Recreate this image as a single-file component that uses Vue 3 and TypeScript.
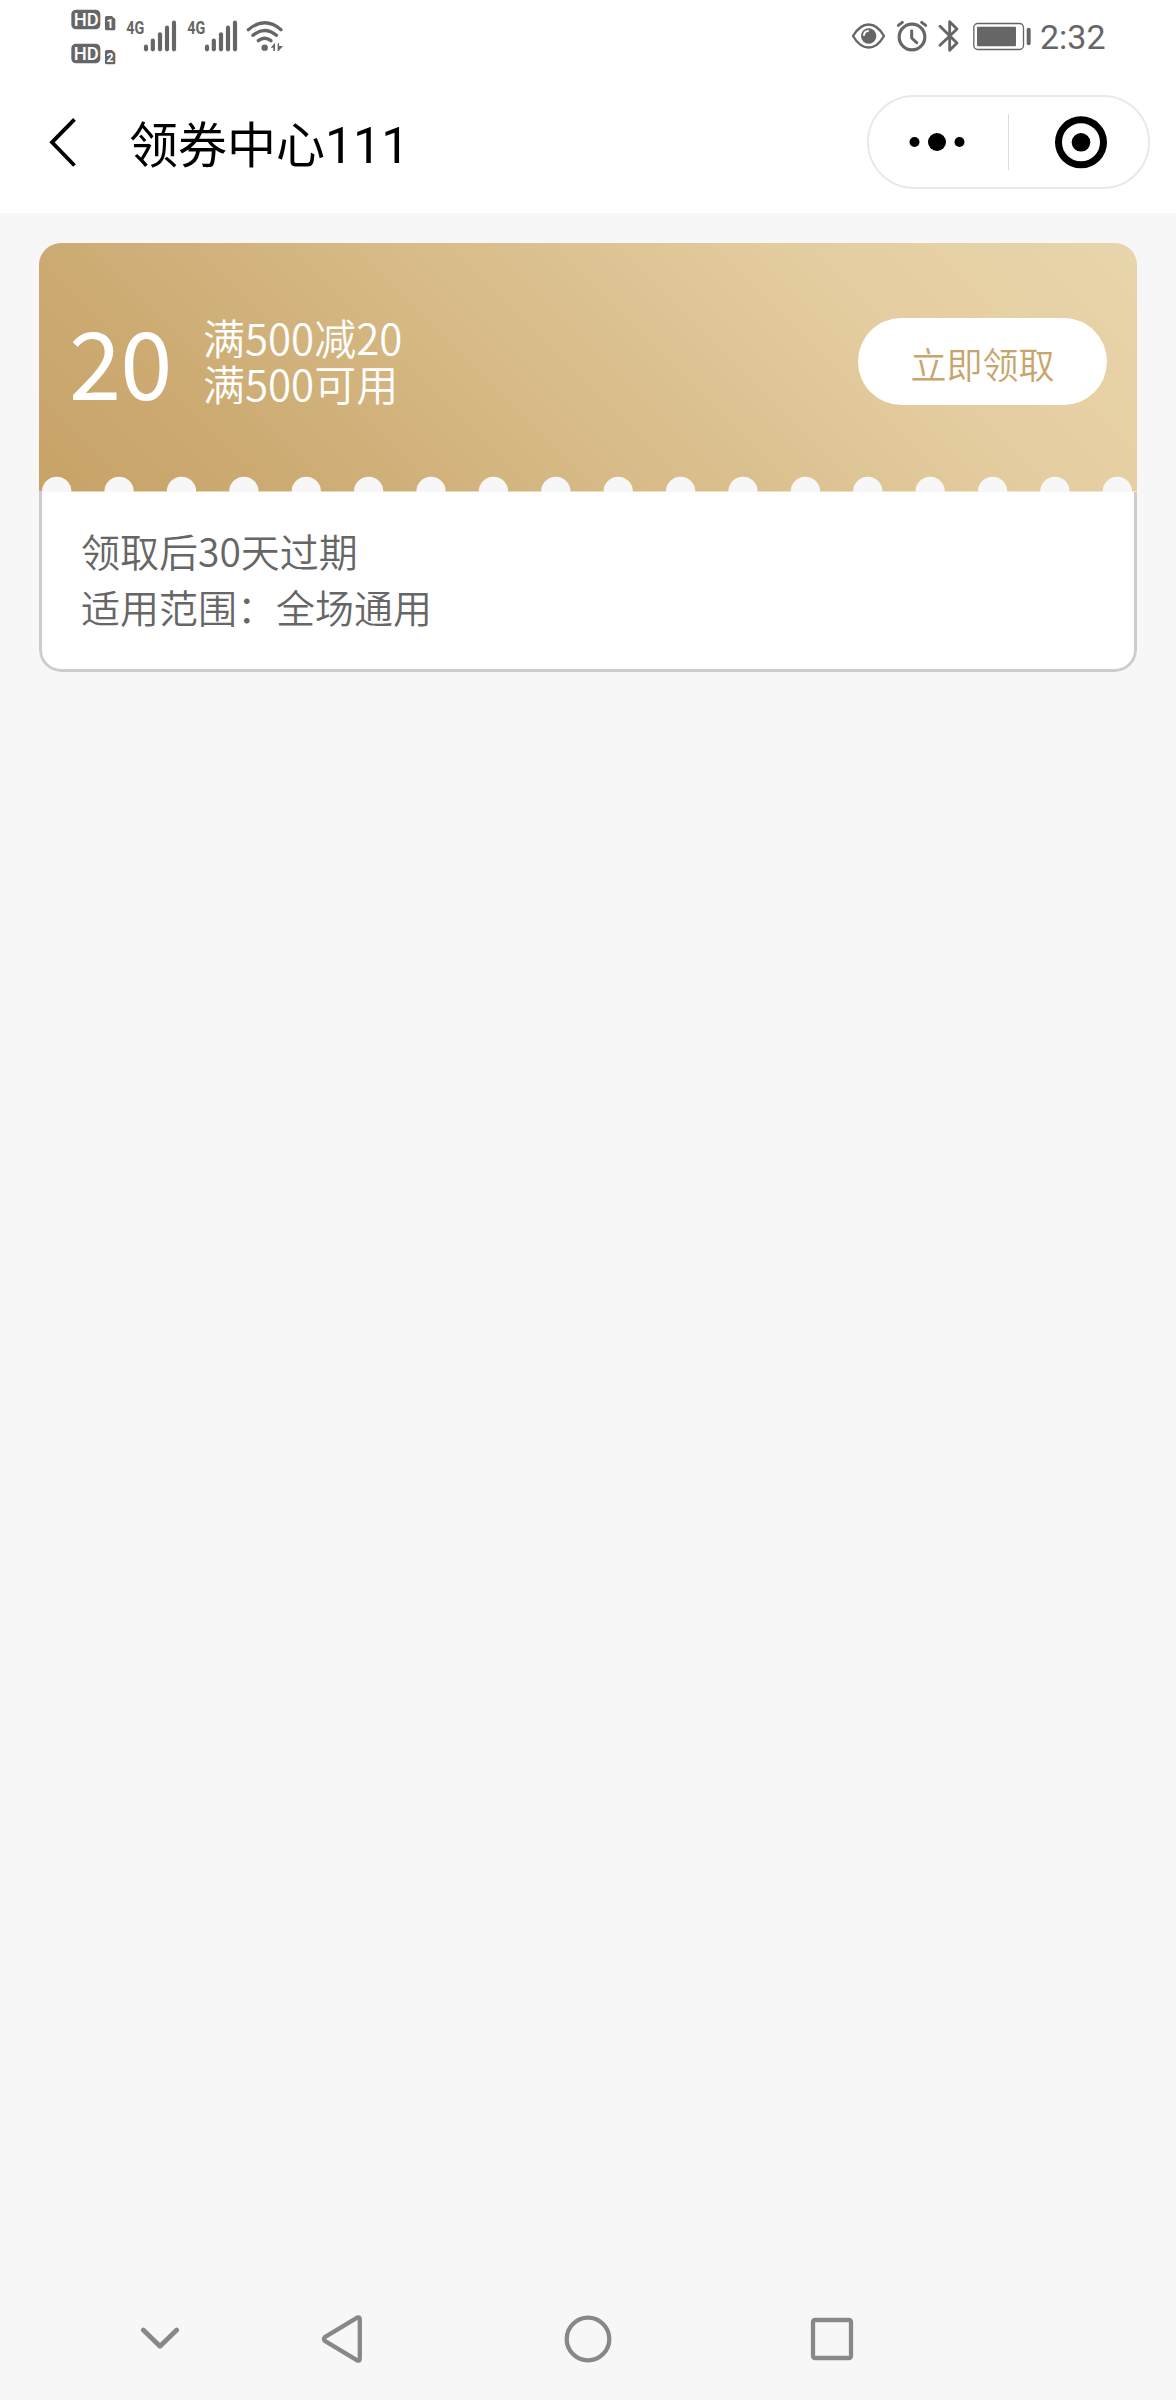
<script setup lang="ts">
const holes: number[] = Array.from({ length: 18 }, (_, i) => 17.7 + i * 62.39)
const bars = [
  { x: 288, y: 140 },
  { x: 308.5, y: 122 },
  { x: 330, y: 103 },
  { x: 351, y: 83 },
  { x: 372, y: 68 },
]
const coupon = {
  amount: '20',
  title: '满500减20',
  condition: '满500可用',
  expiry: '领取后30天过期',
  scope: '适用范围：全场通用',
}
</script>

<template>
  <div class="page">
    <header class="status">
      <svg class="status-left" width="250" height="75" viewBox="0 0 750 225">
        <g v-for="(n, i) in ['1', '2']" :key="n" :transform="`translate(0 ${i * 102})`">
          <rect x="64" y="29" width="87" height="59" rx="14" fill="#666" />
          <text x="71" y="79" class="hd" textLength="75" lengthAdjust="spacingAndGlyphs">HD</text>
          <path d="M165 53q0-5 5-5h16l10 10v28q0 5-5 5h-21q-5 0-5-5z" fill="#666" />
          <text x="180" y="84" class="sim" text-anchor="middle">{{ n }}</text>
        </g>
        <g v-for="dx in [0, 183]" :key="dx" :transform="`translate(${dx} 0)`">
          <text x="229" y="103" class="net" textLength="54" lengthAdjust="spacingAndGlyphs">4G</text>
          <path
            v-for="b in bars"
            :key="b.x"
            :d="`M${b.x} ${b.y}V148`"
            stroke="#666"
            stroke-width="12.500"
            stroke-linecap="round"
          />
        </g>
        <g fill="none" stroke="#666" stroke-width="10" stroke-linecap="round">
          <path d="M595 89Q644 48 693 89" />
          <path d="M609 106Q644 77 679 106" />
          <path d="M625 122Q644 107 663 122" />
        </g>
        <circle cx="644" cy="143" r="9.500" fill="#666" />
        <path d="M662 143L675 128V153H670V143ZM683 130H687V138H699L686 153H683Z" fill="#666" />
      </svg>
      <div class="status-right">
        <svg width="193" height="75" viewBox="0 0 579 225">
          <g fill="none" stroke="#666" stroke-linecap="round" stroke-linejoin="round">
            <path d="M39 108C66 62 106 62 132 108C106 154 66 154 39 108Z" stroke-width="7" />
            <circle cx="216" cy="111" r="38.500" stroke-width="9.500" />
            <path d="M215 92V114L230 128" stroke-width="9" />
            <path d="M175 76L187 67M257 76L245 67" stroke-width="9" />
            <path d="M300 79L351 129L329 151V65L351 87L300 136" stroke-width="8.500" />
            <rect x="401.500" y="70.500" width="149" height="78" rx="12" stroke-width="4" />
            <path d="M566 89V130" stroke-width="12" />
          </g>
          <circle cx="86" cy="108" r="23" fill="#666" />
          <path d="M72 105Q73 94 84 93" fill="none" stroke="#fff" stroke-width="6" stroke-linecap="round" />
          <rect x="411" y="80" width="117" height="59" rx="3" fill="#666" />
        </svg>
        <span class="clock">2:32</span>
      </div>
    </header>

    <nav class="nav">
      <svg class="back" width="40" height="60" viewBox="0 0 40 60">
        <path d="M29.500 7.300L7 30.300L29.500 53.500" fill="none" stroke="#000" stroke-width="3.800" />
      </svg>
      <h1><span class="han">领券中心</span>111</h1>
      <div class="capsule">
        <svg width="60" height="60" viewBox="0 0 60 60">
          <circle cx="7.500" cy="30" r="5" />
          <circle cx="30" cy="30" r="9" />
          <circle cx="52.500" cy="30" r="5" />
        </svg>
        <i class="divider"></i>
        <svg width="60" height="60" viewBox="0 0 60 60">
          <circle cx="30" cy="30.300" r="22.500" fill="none" stroke="#000" stroke-width="7" />
          <circle cx="30" cy="30.300" r="9.300" />
        </svg>
      </div>
    </nav>

    <main class="content">
      <article class="coupon">
        <section class="top">
          <div class="summary">
            <strong class="amount">{{ coupon.amount }}</strong>
            <div class="terms">
              <p>{{ coupon.title }}</p>
              <p>{{ coupon.condition }}</p>
            </div>
            <button class="claim" type="button">立即领取</button>
          </div>
          <svg class="perforation" width="1098" height="16" viewBox="0 0 1098 16">
            <ellipse v-for="x in holes" :key="x" :cx="x" cy="15.500" rx="14.700" ry="14.700" fill="#f7f7f7" />
          </svg>
        </section>
        <section class="details">
          <p>{{ coupon.expiry }}</p>
          <p>{{ coupon.scope }}</p>
        </section>
      </article>
    </main>

    <footer class="system">
      <svg class="key-hide" width="60" height="60" viewBox="0 0 60 60">
        <path d="M13.300 21L30 37.300L46.700 21" />
      </svg>
      <svg class="key-back" width="60" height="60" viewBox="0 0 60 60">
        <path d="M13.800 28.200L46.200 8.600Q48.800 7.500 48.800 10.500V49.500Q48.800 52.500 46.200 51.400L13.800 31.800Q12 30 13.800 28.200Z" />
      </svg>
      <svg class="key-home" width="60" height="60" viewBox="0 0 60 60">
        <circle cx="30" cy="30" r="21.300" />
      </svg>
      <svg class="key-recent" width="60" height="60" viewBox="0 0 60 60">
        <rect x="11" y="11" width="38" height="38" rx="2" />
      </svg>
    </footer>
  </div>
</template>

<style>
body {
  margin: 0;
  background: #f7f7f7;
}
</style>

<style scoped>
.page {
  display: flex;
  flex-direction: column;
  width: 1176px;
  height: 2400px;
  background: #f7f7f7;
  font-family: "Noto Sans CJK SC", sans-serif;
}
svg {
  display: block;
  flex: none;
}
p,
h1 {
  margin: 0;
}
.status {
  display: flex;
  justify-content: space-between;
  height: 75px;
  padding: 0 71px 0 50px;
  background: #fff;
}
.hd {
  font: 500 55px Roboto, sans-serif;
  fill: #fff;
}
.sim {
  font: 700 37px Roboto, sans-serif;
  fill: #fff;
}
.net {
  font: 700 57px Roboto, sans-serif;
  fill: #666;
}
.status-right {
  display: flex;
  width: 265px;
}
.clock {
  margin-left: 7px;
  font: 400 34px/75px Roboto, sans-serif;
  color: #666;
}
.nav {
  display: flex;
  align-items: center;
  box-sizing: border-box;
  height: 138px;
  padding: 0 26px 4px 45px;
  background: #fff;
}
h1 {
  margin-left: 44px;
  padding-top: 8px;
  font: 400 50px/70px Roboto, "Noto Sans CJK SC", sans-serif;
  color: #000;
}
.han {
  font-size: 49px;
}
.capsule {
  display: flex;
  align-items: center;
  box-sizing: border-box;
  width: 283px;
  height: 94px;
  margin-left: auto;
  padding-left: 38px;
  border: 2px solid #e9e9e9;
  border-radius: 47px;
}
.divider {
  width: 1px;
  height: 56px;
  margin: 0 42px 0 41px;
  background: #ddd;
}
.content {
  flex: 1;
  padding: 30px 39px;
}
.coupon {
  overflow: hidden;
  border-radius: 22px;
}
.top {
  display: flex;
  flex-direction: column;
  height: 249px;
  background: linear-gradient(45deg, #c8a368 0%, #cba970 15%, #e4cda0 75%, #e9d5ab 100%);
  box-shadow: inset 0 -1px rgba(255, 255, 255, 0.5);
}
.summary {
  display: flex;
  flex: 1;
  align-items: center;
  padding: 3px 30px 0;
}
.amount {
  width: 104px;
  margin-bottom: 5px;
  font-size: 94px;
  font-weight: 400;
  line-height: 100px;
  letter-spacing: -1px;
  color: #fff;
}
.terms {
  margin: 0 0 3px 30px;
  font-size: 42px;
  font-weight: 350;
  line-height: 46px;
  color: #fff;
}
.claim {
  box-sizing: border-box;
  width: 249px;
  height: 87px;
  margin-left: auto;
  padding: 3px 0 0;
  border: 0;
  border-radius: 44px;
  background: #fff;
  font: 350 36px/60px "Noto Sans CJK SC", sans-serif;
  color: #c8a56c;
}
.details {
  box-sizing: border-box;
  height: 180px;
  padding: 30px 39px 0;
  border: 3px solid #ccc;
  border-top: 0;
  border-radius: 0 0 22px 22px;
  background: #fff;
  font-size: 39px;
  font-weight: 350;
  line-height: 56px;
  color: #666;
}
.system {
  display: flex;
  align-items: center;
  height: 122px;
  padding-left: 130px;
  fill: none;
  stroke: #888;
  stroke-width: 4.300;
  stroke-linecap: round;
  stroke-linejoin: round;
}
.key-hide {
  stroke-width: 4.800;
}
.key-back {
  margin-left: 121px;
}
.key-home {
  margin-left: 187px;
}
.key-recent {
  margin-left: 184px;
}
</style>
